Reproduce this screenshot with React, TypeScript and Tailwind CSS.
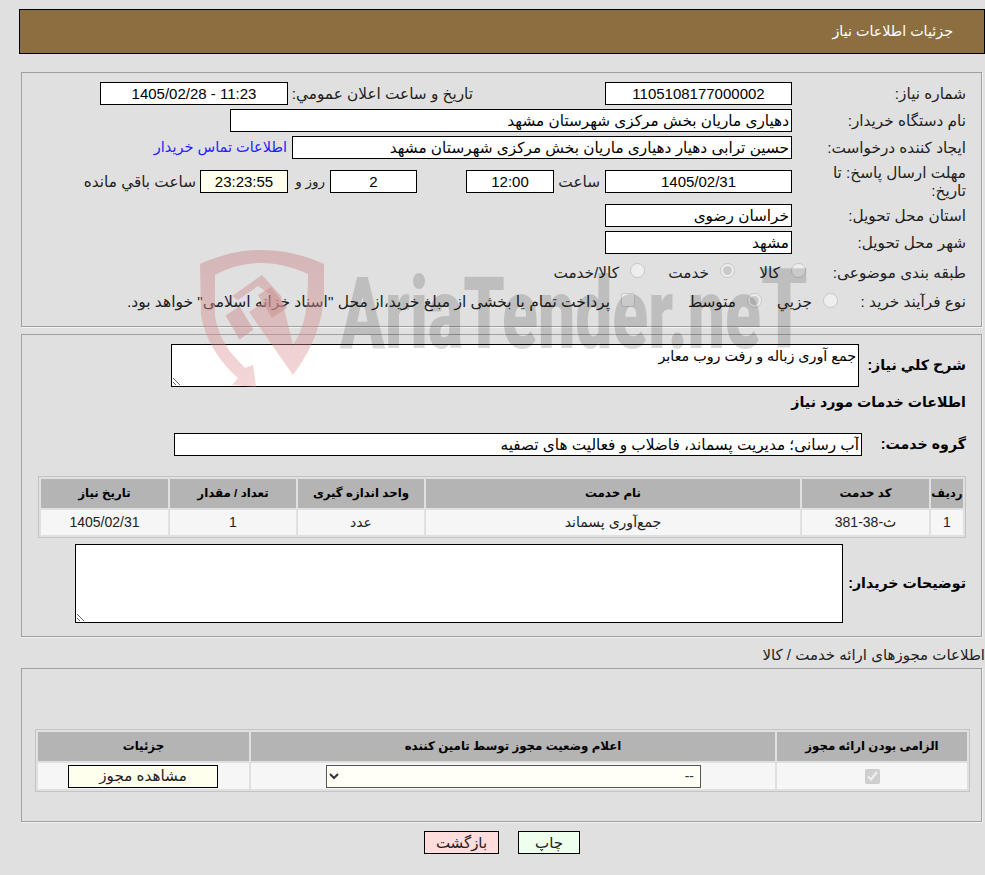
import type { ReactNode } from "react"

const fieldClass =
  "h-[23px] border border-black bg-white px-[2px] leading-[21px] text-black outline-none"

function Field({ value, width, center, bg }: { value: string; width: string; center?: boolean; bg?: string }) {
  return (
    <input
      readOnly
      dir="rtl"
      value={value}
      className={`${fieldClass} ${width} ${center ? "text-center text-[15px]" : "text-right text-[15.3px]"} ${bg ?? ""}`}
    />
  )
}

function Label({ children }: { children: ReactNode }) {
  return <div className="w-[174px] shrink-0 whitespace-nowrap pt-[1px] text-right">{children}</div>
}

function Watermark() {
  return (
    <div className="pointer-events-none absolute left-[195px] top-[245px] h-[145px] w-[610px]">
      <svg width="135" height="145" viewBox="195 245 135 145" className="absolute left-0 top-0">
        <defs>
          <linearGradient id="shieldFade" x1="0" y1="0" x2="0" y2="1">
            <stop offset="0" stopColor="#c98d8d" stopOpacity="0.5" />
            <stop offset="1" stopColor="#e08a8a" stopOpacity="0.35" />
          </linearGradient>
        </defs>
        <path
          fill="url(#shieldFade)"
          d="M200 264 C222 254 242 250 262 250 C284 250 304 255 324 264 L324 296 C322 328 308 355 293 375 L249 312 L272 296 L258 286 L238 300 L232 296 L262 275 L281 296 L293 345 C304 328 308 312 308 274 C292 267 278 263 262 263 C244 263 230 267 215 275 L215 317 C218 332 224 344 232 354 L245 368 L253 365 L256 387 L232 385 L238 378 C220 362 205 340 201 315 Z"
        />
        <path fill="#c98d8d" fillOpacity="0.5" d="M226 316 L240 307 L254 330 L240 340 Z" transform="translate(-0.5 -0.5)" />
        <path fill="#c98d8d" fillOpacity="0.5" d="M258 295 L271 287 L287 308 L272 318 Z" />
      </svg>
      <div
        className="absolute left-[145px] top-[5px] origin-left scale-x-[0.66] whitespace-nowrap text-[100px] font-black leading-[120px] text-black/15"
        style={{ fontFamily: "Roboto, sans-serif" }}
        dir="ltr"
      >
        AriaTender.ne<span className="text-[112px]">T</span>
      </div>
    </div>
  )
}

export default function App() {
  return (
    <div
      dir="rtl"
      className="relative h-[875px] overflow-hidden bg-[#e0e0e0] text-[15.3px] text-[#222] font-['Liberation_Sans','DejaVu_Sans',sans-serif]"
    >
      {/* Header */}
      <div className="ml-[19px] mt-[9px] flex h-[45px] w-[966px] items-center border border-black bg-[#8d6e41] pr-[31px] text-[14.3px] text-white">
        جزئیات اطلاعات نیاز
      </div>

      {/* Main details */}
      <div className="ml-[21px] mr-[3px] mt-[18px] h-[255px] border border-[#a0a0a0] pr-[15px] pt-[9px] shadow-[1px_1px_0_#f2f2f2]">
        <div className="flex h-[23px] items-center">
          <Label>شماره نیاز:</Label>
          <Field value="1105108177000002" width="w-[187px]" center />
          <div className="mr-[132px] w-[185px] whitespace-nowrap pt-[1px] text-right">تاریخ و ساعت اعلان عمومي:</div>
          <Field value="11:23 - 1405/02/28" width="w-[188px]" center />
        </div>
        <div className="mt-[4px] flex h-[23px] items-center">
          <Label>نام دستگاه خریدار:</Label>
          <Field value="دهیاری ماریان بخش مرکزی شهرستان مشهد" width="w-[562px]" />
        </div>
        <div className="mt-[4px] flex h-[23px] items-center">
          <Label>ایجاد کننده درخواست:</Label>
          <Field value="حسین ترابی دهیار دهیاری ماریان بخش مرکزی شهرستان مشهد" width="w-[500px]" />
          <a className="mr-[5px] text-[14.5px] text-[#2222ff]">اطلاعات تماس خریدار</a>
        </div>
        <div className="mt-[11px] flex h-[23px] items-center">
          <div className="w-[174px] shrink-0 pl-[30px] text-right leading-[18px]">مهلت ارسال پاسخ: تا تاریخ:</div>
          <Field value="1405/02/31" width="w-[187px]" center />
          <div className="w-[51px] whitespace-nowrap pr-[5px] pt-[1px]">ساعت</div>
          <Field value="12:00" width="w-[88px]" center />
          <div className="w-[49px]" />
          <Field value="2" width="w-[87px]" center />
          <div className="w-[42px] whitespace-nowrap pr-[5px] pt-[1px] text-[13.5px]">روز و</div>
          <Field value="23:23:55" width="w-[88px]" center bg="!bg-[#ffffee]" />
          <div className="mr-[4px] whitespace-nowrap pt-[1px]">ساعت باقي مانده</div>
        </div>
        <div className="mt-[11px] flex h-[23px] items-center">
          <Label>استان محل تحویل:</Label>
          <Field value="خراسان رضوی" width="w-[187px]" />
        </div>
        <div className="mt-[4px] flex h-[23px] items-center">
          <Label>شهر محل تحویل:</Label>
          <Field value="مشهد" width="w-[187px]" />
        </div>
        <div className="mt-[9px] flex h-[20px] items-center">
          <div className="w-[160px] shrink-0 whitespace-nowrap text-right">طبقه بندی موضوعی:</div>
          <input type="radio" disabled className="m-0 mb-[5px] size-[15px]" />
          <span className="mr-[11px] w-[45px] text-right">کالا</span>
          <input type="radio" disabled defaultChecked className="m-0 mb-[5px] size-[15px]" />
          <span className="mr-[11px] w-[64px] text-right">خدمت</span>
          <input type="radio" disabled className="m-0 mb-[5px] size-[15px]" />
          <span className="mr-[11px]">کالا/خدمت</span>
        </div>
        <div className="mt-[9px] flex h-[20px] items-center">
          <div className="w-[128px] shrink-0 whitespace-nowrap text-right">نوع فرآیند خرید :</div>
          <input type="radio" disabled className="m-0 mb-[4px] size-[15px]" />
          <span className="mr-[11px] w-[50px] text-right">جزیي</span>
          <input type="radio" disabled defaultChecked className="m-0 mb-[4px] size-[15px]" />
          <span className="mr-[11px] w-[101px] text-right">متوسط</span>
          <input type="checkbox" disabled className="m-0 mb-[4px] size-[14px]" />
          <span className="mr-[11px] whitespace-nowrap text-[15.5px]">پرداخت تمام یا بخشی از مبلغ خرید،از محل "اسناد خزانه اسلامی" خواهد بود.</span>
        </div>
      </div>

      {/* Service details */}
      <div className="ml-[21px] mr-[3px] mt-[7px] h-[303px] border border-[#a0a0a0] pr-[15px] pt-[9px] shadow-[1px_1px_0_#f2f2f2]">
        <div className="flex items-center">
          <div className="w-[107px] shrink-0 whitespace-nowrap text-right text-[14.2px] font-bold text-black">شرح کلي نیاز:</div>
          <textarea
            readOnly
            dir="rtl"
            value="جمع آوری زباله و رفت روب معابر"
            className="block h-[43px] w-[688px] border border-black bg-white px-[2px] pt-[2px] text-[14.3px] leading-[18px] text-black outline-none"
          />
        </div>
        <div className="mt-[5px] h-[22px] text-right text-[14.2px] font-bold text-black">اطلاعات خدمات مورد نیاز</div>
        <div className="mt-[19px] flex items-center">
          <div className="w-[104px] shrink-0 whitespace-nowrap text-right text-[14.2px] font-bold text-black">گروه خدمت:</div>
          <Field value="آب رسانی؛ مدیریت پسماند، فاضلاب و فعالیت های تصفیه" width="w-[688px]" />
        </div>
        <table className="mt-[20px] w-[928px] table-fixed border-separate border-spacing-[2px] border border-[#c4c4c4] text-center">
          <colgroup>
            <col className="w-[32px]" />
            <col className="w-[127px]" />
            <col className="w-[374px]" />
            <col className="w-[126px]" />
            <col className="w-[126px]" />
            <col className="w-[127px]" />
          </colgroup>
          <thead>
            <tr className="h-[29px] bg-[#b4b4b4] text-[11.8px] font-bold text-black">
              <th>ردیف</th>
              <th>کد خدمت</th>
              <th>نام خدمت</th>
              <th>واحد اندازه گیری</th>
              <th>تعداد / مقدار</th>
              <th>تاریخ نیاز</th>
            </tr>
          </thead>
          <tbody>
            <tr className="h-[25px] bg-[#f6f6f6] text-[14px]">
              <td>1</td>
              <td>ث-38-381</td>
              <td>جمع‌آوری پسماند</td>
              <td>عدد</td>
              <td>1</td>
              <td>1405/02/31</td>
            </tr>
          </tbody>
        </table>
        <div className="mt-[6px] flex items-center">
          <div className="w-[123px] shrink-0 whitespace-nowrap text-right text-[14.2px] font-bold text-black">توضیحات خریدار:</div>
          <textarea
            readOnly
            dir="rtl"
            className="block h-[79px] w-[768px] border border-black bg-white outline-none"
          />
        </div>
      </div>

      {/* Permits */}
      <div className="mt-[7px] h-[24px] text-right text-[15px] leading-[22px]">اطلاعات مجوزهای ارائه خدمت / کالا</div>
      <div className="ml-[21px] mr-[3px] h-[154px] border border-[#a0a0a0] pr-[11px] pt-[60px] shadow-[1px_1px_0_#f2f2f2]">
        <table className="w-[935px] table-fixed border-separate border-spacing-[2px] border border-[#c4c4c4] text-center">
          <colgroup>
            <col className="w-[190px]" />
            <col className="w-[524px]" />
            <col className="w-[211px]" />
          </colgroup>
          <thead>
            <tr className="h-[29px] bg-[#b4b4b4] text-[11.8px] font-bold text-black">
              <th>الزامی بودن ارائه مجوز</th>
              <th>اعلام وضعیت مجوز توسط تامین کننده</th>
              <th>جزئیات</th>
            </tr>
          </thead>
          <tbody>
            <tr className="h-[26px] bg-[#f6f6f6]">
              <td>
                <input type="checkbox" disabled defaultChecked className="m-0 size-[15px] align-middle" />
              </td>
              <td>
                <select
                  disabled
                  dir="rtl"
                  className="mr-[74px] block h-[23px] w-[375px] border border-[#555] bg-[#fffff5] pr-[2px] text-[14px] text-[#333] opacity-100 [appearance:auto]"
                >
                  <option>--</option>
                </select>
              </td>
              <td>
                <button className="mr-[31px] block h-[23px] w-[150px] border border-black bg-[#ffffee] text-[15.2px] leading-[20px] text-[#222]">
                  مشاهده مجوز
                </button>
              </td>
            </tr>
          </tbody>
        </table>
      </div>

      {/* Actions */}
      <div className="mr-[405px] mt-[9px] flex">
        <button className="h-[23px] w-[62px] border border-black bg-[#eeffee] text-[15px] leading-[20px] text-[#222]">چاپ</button>
        <button className="mr-[19px] h-[23px] w-[75px] border border-black bg-[#ffdddd] text-[15px] leading-[20px] text-[#222]">بازگشت</button>
      </div>

      <Watermark />
    </div>
  )
}
